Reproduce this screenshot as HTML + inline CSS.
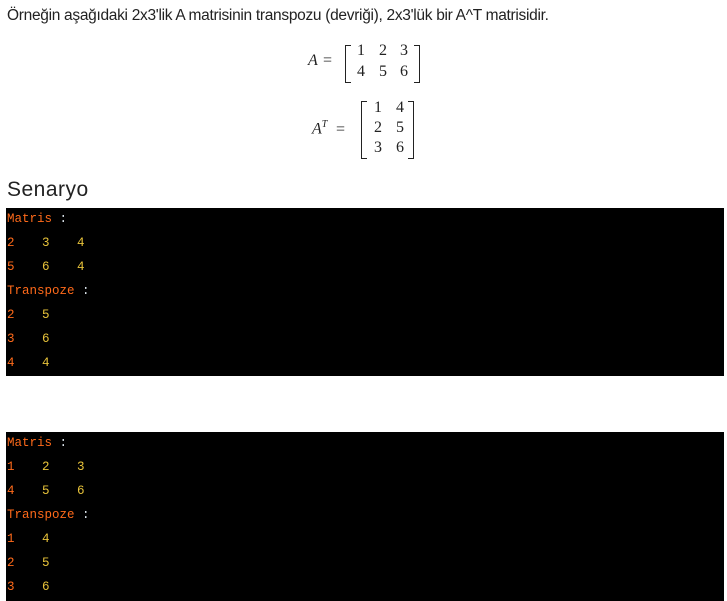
<!DOCTYPE html>
<html><head><meta charset="utf-8"><style>
body{margin:0;width:727px;height:601px;background:#fff;position:relative;overflow:hidden;font-family:"Liberation Sans",sans-serif;}
.p{position:absolute;left:7px;top:7px;font-size:15.5px;color:#222;letter-spacing:-0.3px;white-space:nowrap}
.m{position:absolute;font-family:"Liberation Serif",serif;font-size:16px;color:#222}
.h{position:absolute;left:7px;top:178px;font-size:21px;color:#222;letter-spacing:0.5px}
.c{position:absolute;left:6px;width:718px;background:#000;font-family:"Liberation Mono",monospace;font-size:12.5px}
.c span{position:absolute;line-height:16px}
.o{color:#ff6a1a}.y{color:#e8c33a}.w{color:#dfe8ef}
.br{position:absolute;border:1.3px solid #222;width:5px}
</style></head><body>
<div class="p">Örneğin aşağıdaki 2x3'lik A matrisinin transpozu (devriği), 2x3'lük bir A^T matrisidir.</div>

<div class="m" style="left:308px;top:52px;font-style:italic">A</div>
<div class="m" style="left:323px;top:52px">=</div>
<div class="br" style="left:345px;top:45px;height:36px;border-right:none"></div>
<div class="m" style="left:357px;top:42px">1</div><div class="m" style="left:379px;top:42px">2</div><div class="m" style="left:400px;top:42px">3</div>
<div class="m" style="left:357px;top:63px">4</div><div class="m" style="left:379px;top:63px">5</div><div class="m" style="left:400px;top:63px">6</div>
<div class="br" style="left:414px;top:45px;height:36px;border-left:none"></div>

<div class="m" style="left:312px;top:119px;font-style:italic">A<sup style="font-size:10px">T</sup></div>
<div class="m" style="left:336px;top:121px">=</div>
<div class="br" style="left:361px;top:101px;height:56px;border-right:none"></div>
<div class="m" style="left:374px;top:99px">1</div><div class="m" style="left:396px;top:99px">4</div>
<div class="m" style="left:374px;top:119px">2</div><div class="m" style="left:396px;top:119px">5</div>
<div class="m" style="left:374px;top:139px">3</div><div class="m" style="left:396px;top:139px">6</div>
<div class="br" style="left:408px;top:101px;height:56px;border-left:none"></div>

<div class="h">Senaryo</div>

<div class="c" style="top:208px;height:168px">
<span class="o" style="left:1px;top:3px">Matris <b class="w" style="font-weight:normal">:</b></span>
<span class="o" style="left:1px;top:27px">2</span><span class="y" style="left:36px;top:27px">3</span><span class="y" style="left:71px;top:27px">4</span>
<span class="o" style="left:1px;top:51px">5</span><span class="y" style="left:36px;top:51px">6</span><span class="y" style="left:71px;top:51px">4</span>
<span class="o" style="left:1px;top:75px">Transpoze <b class="w" style="font-weight:normal">:</b></span>
<span class="o" style="left:1px;top:99px">2</span><span class="y" style="left:36px;top:99px">5</span>
<span class="o" style="left:1px;top:123px">3</span><span class="y" style="left:36px;top:123px">6</span>
<span class="o" style="left:1px;top:147px">4</span><span class="y" style="left:36px;top:147px">4</span>
</div>

<div class="c" style="top:432px;height:169px">
<span class="o" style="left:1px;top:3px">Matris <b class="w" style="font-weight:normal">:</b></span>
<span class="o" style="left:1px;top:27px">1</span><span class="y" style="left:36px;top:27px">2</span><span class="y" style="left:71px;top:27px">3</span>
<span class="o" style="left:1px;top:51px">4</span><span class="y" style="left:36px;top:51px">5</span><span class="y" style="left:71px;top:51px">6</span>
<span class="o" style="left:1px;top:75px">Transpoze <b class="w" style="font-weight:normal">:</b></span>
<span class="o" style="left:1px;top:99px">1</span><span class="y" style="left:36px;top:99px">4</span>
<span class="o" style="left:1px;top:123px">2</span><span class="y" style="left:36px;top:123px">5</span>
<span class="o" style="left:1px;top:147px">3</span><span class="y" style="left:36px;top:147px">6</span>
</div>
</body></html>
